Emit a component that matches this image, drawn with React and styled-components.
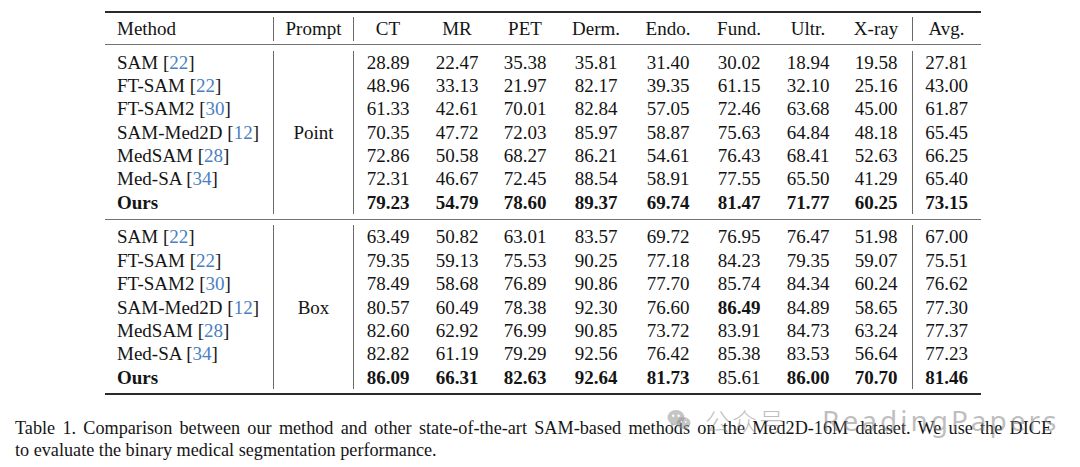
import React from "react";
import styled, { createGlobalStyle } from "styled-components";

const GlobalStyle = createGlobalStyle`
  html, body {
    margin: 0;
    padding: 0;
    background: #ffffff;
  }
  body {
    font-family: "Liberation Serif", "Times New Roman", serif;
    color: #141414;
  }
`;

const COLS = "168px 81px 68px 70px 66px 76px 68px 74px 64px 72px 68px";

const HEAD = ["CT", "MR", "PET", "Derm.", "Endo.", "Fund.", "Ultr.", "X-ray"];

// each row: name, cite, values (8 modalities + avg), bold column indexes
const sections = [
  {
    prompt: "Point",
    rows: [
      ["SAM", "22", ["28.89", "22.47", "35.38", "35.81", "31.40", "30.02", "18.94", "19.58", "27.81"], []],
      ["FT-SAM", "22", ["48.96", "33.13", "21.97", "82.17", "39.35", "61.15", "32.10", "25.16", "43.00"], []],
      ["FT-SAM2", "30", ["61.33", "42.61", "70.01", "82.84", "57.05", "72.46", "63.68", "45.00", "61.87"], []],
      ["SAM-Med2D", "12", ["70.35", "47.72", "72.03", "85.97", "58.87", "75.63", "64.84", "48.18", "65.45"], []],
      ["MedSAM", "28", ["72.86", "50.58", "68.27", "86.21", "54.61", "76.43", "68.41", "52.63", "66.25"], []],
      ["Med-SA", "34", ["72.31", "46.67", "72.45", "88.54", "58.91", "77.55", "65.50", "41.29", "65.40"], []],
      ["Ours", null, ["79.23", "54.79", "78.60", "89.37", "69.74", "81.47", "71.77", "60.25", "73.15"], [0, 1, 2, 3, 4, 5, 6, 7, 8]],
    ],
  },
  {
    prompt: "Box",
    rows: [
      ["SAM", "22", ["63.49", "50.82", "63.01", "83.57", "69.72", "76.95", "76.47", "51.98", "67.00"], []],
      ["FT-SAM", "22", ["79.35", "59.13", "75.53", "90.25", "77.18", "84.23", "79.35", "59.07", "75.51"], []],
      ["FT-SAM2", "30", ["78.49", "58.68", "76.89", "90.86", "77.70", "85.74", "84.34", "60.24", "76.62"], []],
      ["SAM-Med2D", "12", ["80.57", "60.49", "78.38", "92.30", "76.60", "86.49", "84.89", "58.65", "77.30"], [5]],
      ["MedSAM", "28", ["82.60", "62.92", "76.99", "90.85", "73.72", "83.91", "84.73", "63.24", "77.37"], []],
      ["Med-SA", "34", ["82.82", "61.19", "79.29", "92.56", "76.42", "85.38", "83.53", "56.64", "77.23"], []],
      ["Ours", null, ["86.09", "66.31", "82.63", "92.64", "81.73", "85.61", "86.00", "70.70", "81.46"], [0, 1, 2, 3, 4, 6, 7, 8]],
    ],
  },
];

const Page = styled.div`
  position: relative;
  width: 1080px;
  height: 467px;
  overflow: hidden;
  padding-top: 11px;
  box-sizing: border-box;
`;

const Table = styled.div`
  margin-left: 105px;
  width: 876px;
  font-size: 19px;
`;

const Section = styled.div`
  display: grid;
  grid-template-columns: ${COLS};
  grid-auto-rows: ${(p) => (p.$head ? "24px" : "23.4px")};
  line-height: ${(p) => (p.$head ? "24px" : "23.4px")};
  padding: ${(p) => p.$pad};
  border-top: ${(p) => (p.$top ? "2px solid #2a2a2a" : "none")};
  border-bottom: ${(p) => p.$bottom};
`;

const MethodCell = styled.div`
  padding-left: 12px;
  white-space: nowrap;
  font-weight: ${(p) => (p.$bold ? 700 : 400)};
  grid-column: 1;
`;

const PromptCell = styled.div`
  grid-column: 2;
  grid-row: ${(p) => (p.$span ? `1 / span ${p.$span}` : "auto")};
  display: flex;
  align-items: center;
  justify-content: center;
  border-left: 1px solid #6a6a6a;
  border-right: 1px solid #6a6a6a;
`;

const NumCell = styled.div`
  text-align: center;
  white-space: nowrap;
  font-weight: ${(p) => (p.$bold ? 700 : 400)};
  border-left: ${(p) => (p.$divider ? "1px solid #6a6a6a" : "none")};
`;

const Cite = styled.span`
  color: #4a7fc1;
`;

const Caption = styled.div`
  margin-top: 22px;
  margin-left: 15px;
  width: 1037px;
  font-size: 18.2px;
  line-height: 22px;
  color: #151515;
`;

const CaptionLine = styled.div`
  white-space: nowrap;
  text-align: ${(p) => (p.$fill ? "justify" : "left")};
  text-align-last: ${(p) => (p.$fill ? "justify" : "auto")};
`;

const Watermark = styled.div`
  position: absolute;
  left: 667px;
  top: 405px;
  display: flex;
  align-items: center;
  gap: 14px;
  color: rgba(125, 125, 125, 0.5);
  pointer-events: none;
`;

const WmLabel = styled.span`
  font-family: "Noto Sans CJK SC", "Noto Sans", sans-serif;
  font-size: 25px;
  font-weight: 300;
  letter-spacing: 2px;
  line-height: 30px;
`;

const WmName = styled.span`
  margin-left: 22px;
  font-family: "Noto Sans", "Open Sans", sans-serif;
  font-size: 28px;
  letter-spacing: 3px;
  line-height: 30px;
`;

const WeChatIcon = () => (
  <svg width="24" height="22" viewBox="0 0 24 22">
    <g fill="rgba(150,150,150,0.55)">
      <ellipse cx="9" cy="8.5" rx="8.5" ry="7.5" />
      <path d="M4 14 L3 18.5 L8 15.5 Z" />
      <ellipse cx="16.5" cy="14" rx="7" ry="6" />
      <path d="M20 18.5 L21.5 21.5 L17 19.5 Z" />
    </g>
    <g fill="#ffffff">
      <circle cx="6.2" cy="6.8" r="1.2" />
      <circle cx="11.6" cy="6.8" r="1.2" />
      <circle cx="14.3" cy="12.8" r="0.9" />
      <circle cx="18.7" cy="12.8" r="0.9" />
    </g>
  </svg>
);

const Body = ({ section, last }) => (
  <Section
    $pad={last ? "5px 0 4px" : "5.5px 0 5.2px"}
    $bottom={last ? "2px solid #2a2a2a" : "1px solid #707070"}
  >
    <PromptCell $span={section.rows.length}>{section.prompt}</PromptCell>
    {section.rows.map(([name, cite, vals, bold], r) => (
      <React.Fragment key={name + r}>
        <MethodCell $bold={name === "Ours"} style={{ gridRow: r + 1 }}>
          {name}
          {cite && (
            <>
              {" "}[<Cite>{cite}</Cite>]
            </>
          )}
        </MethodCell>
        {vals.map((v, i) => (
          <NumCell
            key={i}
            $bold={bold.includes(i)}
            $divider={i === 8}
            style={{ gridRow: r + 1, gridColumn: i + 3 }}
          >
            {v}
          </NumCell>
        ))}
      </React.Fragment>
    ))}
  </Section>
);

export default function App() {
  return (
    <Page>
      <GlobalStyle />
      <Table>
        <Section $head $top $pad="4px 0 3px" $bottom="1px solid #707070">
          <MethodCell>Method</MethodCell>
          <PromptCell>Prompt</PromptCell>
          {HEAD.map((h) => (
            <NumCell key={h}>{h}</NumCell>
          ))}
          <NumCell $divider>Avg.</NumCell>
        </Section>
        {sections.map((s, i) => (
          <Body key={s.prompt} section={s} last={i === sections.length - 1} />
        ))}
      </Table>
      <Caption>
        <CaptionLine $fill>
          Table 1. Comparison between our method and other state-of-the-art SAM-based methods on the Med2D-16M
          dataset. We use the DICE
        </CaptionLine>
        <CaptionLine>to evaluate the binary medical segmentation performance.</CaptionLine>
      </Caption>
      <Watermark>
        <WeChatIcon />
        <WmLabel>公众号</WmLabel>
        <WmName>ReadingPapers</WmName>
      </Watermark>
    </Page>
  );
}
